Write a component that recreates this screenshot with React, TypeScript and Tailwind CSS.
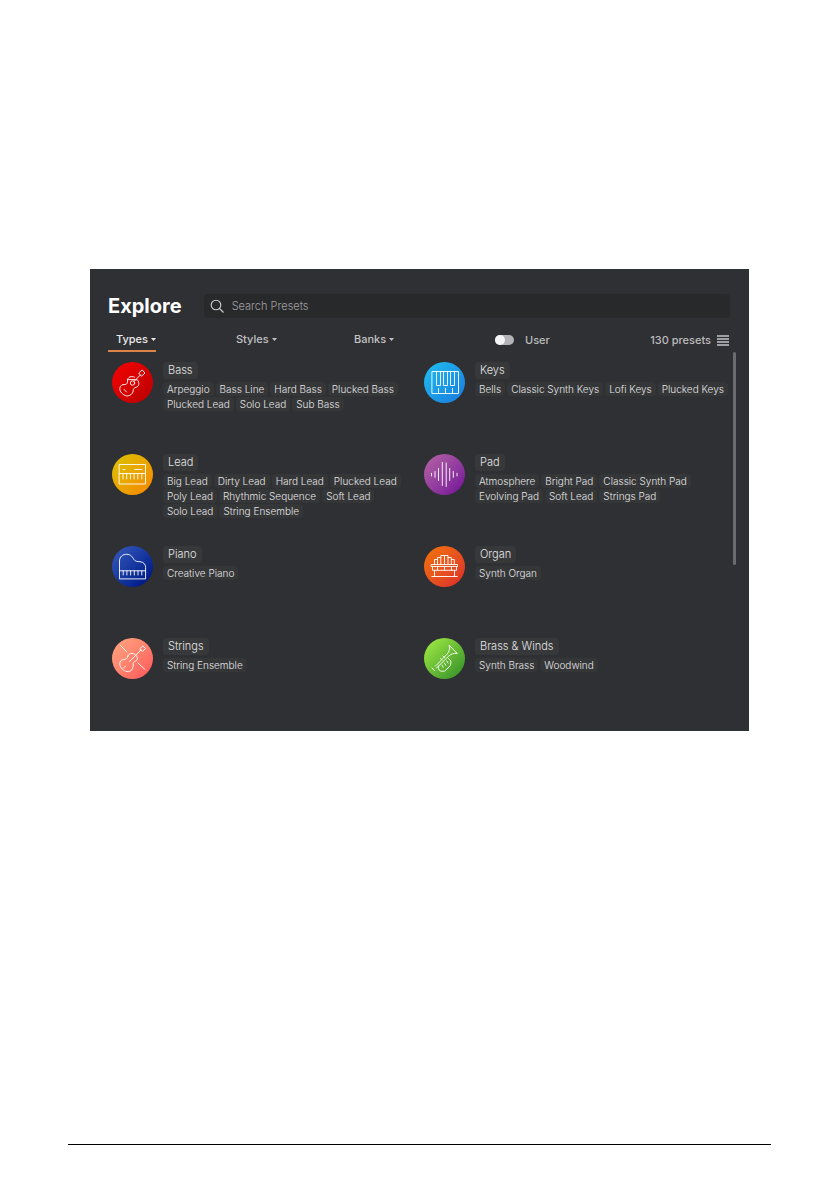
import { useState, type ReactNode } from "react";

type Category = {
  name: string;
  tags: string[];
  disc: string;
  icon: ReactNode;
};

const categories: Category[] = [
  {
    name: "Bass",
    tags: ["Arpeggio", "Bass Line", "Hard Bass", "Plucked Bass", "Plucked Lead", "Solo Lead", "Sub Bass"],
    disc: "from-[#f60404] to-[#b80000]",
    icon: (
      <>
        <path d="M15.5 18C15.5 15 19.5 13.5 22.5 15.2M25.5 18C28 21 27 24.5 24.2 25.2C21.5 26 21.2 27 21.2 29C21 32 17.5 34 14.8 34C10.5 33 7.6 29.5 7.8 26.5C8 23.5 10.5 22.2 12.8 22.5C15 22.8 15.8 20.5 15.5 18Z" />
        <circle cx="20.5" cy="21" r="2.2" />
        <path d="M22 19.5L28.3 13M27 10.8L30.2 8L33 11L29.8 14ZM12 27.3L14.6 30" />
      </>
    ),
  },
  {
    name: "Keys",
    tags: ["Bells", "Classic Synth Keys", "Lofi Keys", "Plucked Keys"],
    disc: "from-[#22c0f0] to-[#1c78dc]",
    icon: (
      <path d="M8.3 9.5H34.5V31.5H8.3ZM12.5 9.5V23.5H16.5V9.5M19.5 9.5V23.5H23.5V9.5M26.5 9.5V23.5H30.5V9.5M14.5 26.5V31.5M21.5 26.5V31.5M28.5 26.5V31.5" />
    ),
  },
  {
    name: "Lead",
    tags: [
      "Big Lead", "Dirty Lead", "Hard Lead", "Plucked Lead", "Poly Lead",
      "Rhythmic Sequence", "Soft Lead", "Solo Lead", "String Ensemble",
    ],
    disc: "from-[#d8c400] to-[#f68400]",
    icon: (
      <path d="M7.5 10.5H33.5V30H7.5ZM7.5 19.5H33.5M11 19.5V25M14.7 19.5V25M18.4 19.5V25M22.1 19.5V25M25.8 19.5V25M29.8 19.5V25M11 15.5H13M22.5 15.5H30" />
    ),
  },
  {
    name: "Pad",
    tags: ["Atmosphere", "Bright Pad", "Classic Synth Pad", "Evolving Pad", "Soft Lead", "Strings Pad"],
    disc: "from-[#b764a4] to-[#740098]",
    icon: (
      <path d="M7.5 19.3V21.9M11 17.5V23.3M14.5 14.5V26.5M18.3 8.5V31.5M22.2 9V32.5M25.7 14.5V26.5M29.3 17.5V23.3M33 19.3V21.9" />
    ),
  },
  {
    name: "Piano",
    tags: ["Creative Piano"],
    disc: "from-[#3a5cc0] to-[#000880]",
    icon: (
      <path d="M7.5 32.5V15C7.5 10.5 11 8.3 14.5 8.3C19 8.3 20.5 11.3 22 13.5C23.5 15.7 25.5 15.5 28 15.7C31.5 16 33.6 18.3 33.6 21.5V32.5ZM7.5 24.8H33.6M11.2 24.8V29M14.9 24.8V29M18.6 24.8V29M22.3 24.8V29M26 24.8V29M29.8 24.8V29" />
    ),
  },
  {
    name: "Organ",
    tags: ["Synth Organ"],
    disc: "from-[#f27400] to-[#dc2828]",
    icon: (
      <path d="M10.5 18.5V13.5H13.5V18.5M13.5 13.5V11.5H16.8V18.5M16.8 11.5V9.5H20.5V18.5M20.5 9.5H24V18.5M24 11.5H27.3V18.5M27.3 13.5H30.3V18.5M7.5 18.5H33.5V20.5H7.5ZM8.5 20.5V24.3H32.5V20.5M13.5 20.5V24.3M20.5 20.5V24.3M27.5 20.5V24.3M10.5 24.3V30.5M30.5 24.3V30.5M7.8 30.5H33.3" />
    ),
  },
  {
    name: "Strings",
    tags: ["String Ensemble"],
    disc: "from-[#ffa882] to-[#ff5258]",
    icon: (
      <>
        <path d="M8.5 7.5L15 14M26 25L33 31.5" />
        <path d="M16 18C16.5 15.5 19.5 14.8 22 16C24.5 17.2 26 19.5 25 22C24.3 23.5 22.5 23 21.5 24.5C20.5 26 22 27.5 20.5 30.5C19.5 33 17 34 15 33.5C11.5 33 8 29.5 7.8 26.5C7.5 23.5 9 21.8 11.5 21.5C14 21.3 15.5 20.5 16 18Z" />
        <path d="M17.5 23.5L29 12M28 10.5L30.8 8L33.5 10.5L30.8 13.2ZM11.5 30L13.5 28" />
      </>
    ),
  },
  {
    name: "Brass & Winds",
    tags: ["Synth Brass", "Woodwind"],
    disc: "from-[#a4f044] to-[#2c8c28]",
    icon: (
      <path d="M25.3 7.5L33.3 15.5C29.5 15 27.2 15.8 24.8 18L12.5 30M25.3 7.5C26 11.5 25.2 13.8 23 16.2L11.5 28.2M8 30L10.8 32.8M14.5 28V30.5C15 33 17 33.5 20.5 33.2L25 29C27 27 26.8 25.5 26.8 23L24.5 20.5M17.8 27L19.2 29.2M20.3 25L21.7 27.2M22.8 23L24 25M16.5 20.5L18 22M19 18L20.5 19.5" />
    ),
  },
];

const tabs = ["Types", "Styles", "Banks"];

function Caret() {
  return (
    <svg className="h-[3px] w-[5px]" viewBox="0 0 5 3" aria-hidden="true">
      <path d="M0 0H5L2.5 3Z" fill="currentColor" />
    </svg>
  );
}

function CategoryCell({ category }: { category: Category }) {
  return (
    <section className="flex min-h-[92px] items-start gap-[10px]">
      <div className={`size-[41px] shrink-0 rounded-full bg-linear-135 ${category.disc}`}>
        <svg
          className="size-full"
          viewBox="0 0 41 41"
          fill="none"
          stroke="#fff"
          strokeOpacity="0.9"
          strokeWidth="1"
          strokeLinejoin="round"
          strokeLinecap="round"
          aria-hidden="true"
        >
          {category.icon}
        </svg>
      </div>
      <div className="flex flex-col items-start gap-[3px]">
        <button className="rounded bg-[#37383a] px-[5px] text-[11px] leading-[17px] font-light text-[#e4e4e5]">
          {category.name}
        </button>
        <div className="flex flex-wrap gap-x-[2px] gap-y-px">
          {category.tags.map((tag) => (
            <button
              key={tag}
              className="rounded bg-[#353638] px-1 text-[10px] leading-[14px] font-light text-[#e4e4e5]"
            >
              {tag}
            </button>
          ))}
        </div>
      </div>
    </section>
  );
}

export default function App() {
  const [active, setActive] = useState("Types");

  return (
    <div className="flex min-h-screen flex-col justify-between bg-white px-[68px] pt-[269px] pb-[46px] font-['Inter','Liberation_Sans',sans-serif]">
      <main className="mx-[22px] bg-[#2f3033] pt-[25px] pr-[13px] pb-px pl-[18px]">
        <header className="flex items-center gap-[22px] pr-[6px]">
          <h1 className="text-[20px] leading-6 font-bold text-white">Explore</h1>
          <label className="flex h-6 flex-1 items-center gap-2 rounded bg-[#28292b] px-[6px]">
            <svg className="size-[14px]" viewBox="0 0 14 14" fill="none" stroke="#d0d0d0" strokeWidth="1.1" aria-hidden="true">
              <circle cx="6" cy="6" r="4.8" />
              <path d="M9.5 9.5L13.5 13.5" />
            </svg>
            <input
              type="search"
              aria-label="Search Presets"
              placeholder="Search Presets"
              className="min-w-0 flex-1 bg-transparent text-[11px] font-light text-white outline-none placeholder:text-[#a0a0a2]"
            />
          </label>
        </header>

        <nav className="mt-[10px] grid grid-cols-[120fr_118fr_149fr_235fr] items-start pr-[6px]">
          {tabs.map((tab) => (
            <div key={tab} className="flex">
              <button
                onClick={() => setActive(tab)}
                className={`flex h-6 items-center gap-[3px] border-b-2 pl-2 text-[11px] font-medium ${
                  active === tab ? "border-[#dc8448] text-[#ececec]" : "border-transparent text-[#c2c2c4]"
                }`}
              >
                {tab}
                <Caret />
              </button>
            </div>
          ))}
          <div className="flex h-6 items-center justify-between pr-px text-[11px] font-medium text-[#bcbcbe]">
            <label className="flex items-center gap-[11px]">
              <input
                type="checkbox"
                className="h-[10px] w-[19px] appearance-none rounded-full bg-[#b4b4b8] before:block before:size-[10px] before:rounded-full before:bg-[#f4f4f4] checked:before:ml-auto"
              />
              User
            </label>
            <button className="flex items-center gap-[6px]">
              130 presets
              <svg className="h-[11px] w-3" viewBox="0 0 12 11" fill="none" stroke="#c4c4c6" strokeWidth="1.6" aria-hidden="true">
                <path d="M0 1H12M0 4H12M0 7H12M0 10H12" />
              </svg>
            </button>
          </div>
        </nav>

        <div className="flex">
          <div className="mt-[10px] grid flex-1 grid-cols-[312fr_309fr] pl-1">
            {categories.map((category) => (
              <CategoryCell key={category.name} category={category} />
            ))}
          </div>
          <div className="h-[213px] w-[3px] rounded-full bg-[#6b6c6f]" />
        </div>
      </main>
      <hr className="border-t border-black" />
    </div>
  );
}
